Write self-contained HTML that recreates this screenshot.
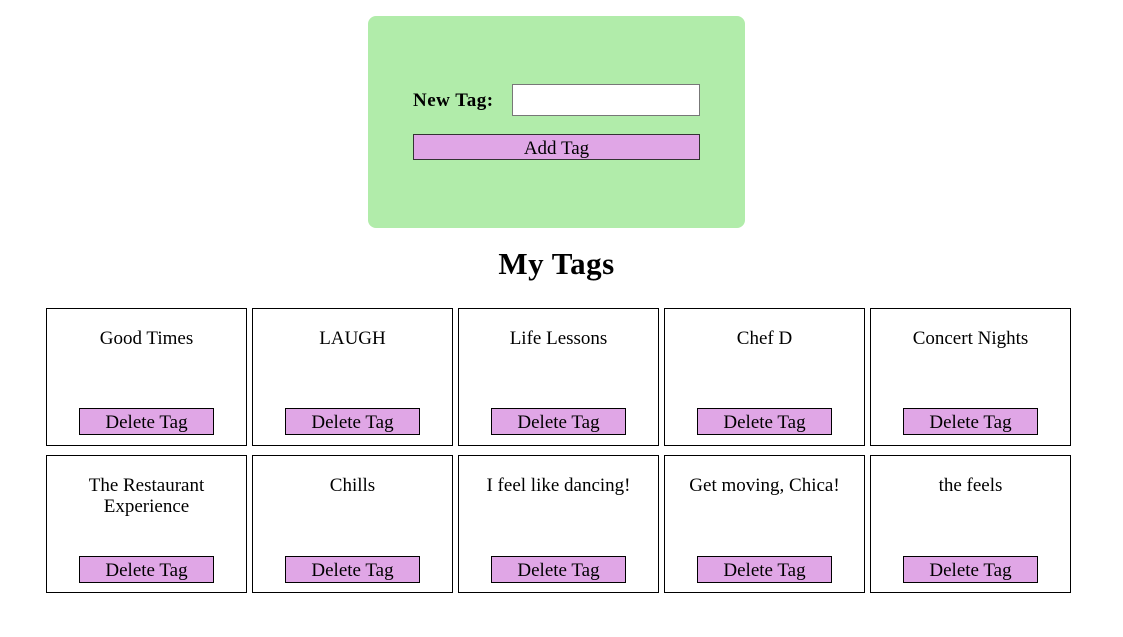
<!DOCTYPE html>
<html><head><style>
body{margin:0;width:1123px;height:637px;background:#fff;font-family:"Liberation Serif",serif;position:relative}
.box{position:absolute;left:368px;top:16px;width:377px;height:212px;background:#b1ecaa;border-radius:8px}
.lbl{position:absolute;left:45px;top:74px;font-weight:bold;font-size:19px;letter-spacing:0.5px}
.inp{position:absolute;left:144px;top:68px;width:188px;height:32px;background:#fff;border:1px solid #777;box-sizing:border-box}
.add{position:absolute;left:45px;top:118px;width:287px;height:26px;background:#e0a6e6;border:1px solid #333;box-sizing:border-box;text-align:center;font-size:19px;line-height:28px}
h1{position:absolute;left:0;width:1113px;top:246px;margin:0;text-align:center;font-size:31px;font-weight:bold;letter-spacing:0.5px}
.card{position:absolute;width:201px;height:138px;border:1px solid #000;box-sizing:border-box;text-align:center;font-size:19px}
.t{position:absolute;left:4px;right:4px;top:19px;line-height:21px}
.d{position:absolute;left:32px;top:99px;width:135px;height:27px;background:#e0a6e6;border:1px solid #000;box-sizing:border-box;line-height:28px;font-size:19px}
</style></head><body>
<div class="box"><div class="lbl">New Tag:</div><div class="inp"></div><div class="add">Add Tag</div></div>
<h1>My Tags</h1>
<div class="card" style="left:46px;top:308px"><div class="t">Good Times</div><div class="d">Delete Tag</div></div>
<div class="card" style="left:252px;top:308px"><div class="t">LAUGH</div><div class="d">Delete Tag</div></div>
<div class="card" style="left:458px;top:308px"><div class="t">Life Lessons</div><div class="d">Delete Tag</div></div>
<div class="card" style="left:664px;top:308px"><div class="t">Chef D</div><div class="d">Delete Tag</div></div>
<div class="card" style="left:870px;top:308px"><div class="t">Concert Nights</div><div class="d">Delete Tag</div></div>
<div class="card" style="left:46px;top:455px"><div class="t">The Restaurant<br>Experience</div><div class="d" style="top:100px">Delete Tag</div></div>
<div class="card" style="left:252px;top:455px"><div class="t">Chills</div><div class="d" style="top:100px">Delete Tag</div></div>
<div class="card" style="left:458px;top:455px"><div class="t">I feel like dancing!</div><div class="d" style="top:100px">Delete Tag</div></div>
<div class="card" style="left:664px;top:455px"><div class="t">Get moving, Chica!</div><div class="d" style="top:100px">Delete Tag</div></div>
<div class="card" style="left:870px;top:455px"><div class="t">the feels</div><div class="d" style="top:100px">Delete Tag</div></div>
</body></html>
